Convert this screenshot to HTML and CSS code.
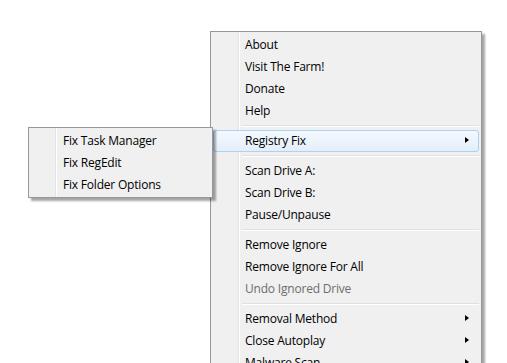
FILE: index.html
```html
<!DOCTYPE html>
<html lang="en">
<head>
    <meta charset="UTF-8">
    <title>Tray Menu</title>
    <link rel="stylesheet" href="styles.css">
</head>
<body>

    <!-- Main context menu -->
    <div class="menu main-menu">
        <div class="item">About</div>
        <div class="item">Visit The Farm!</div>
        <div class="item">Donate</div>
        <div class="item">Help</div>
        <div class="sep"></div>
        <div class="item sub active">Registry Fix</div>
        <div class="sep"></div>
        <div class="item">Scan Drive A:</div>
        <div class="item">Scan Drive B:</div>
        <div class="item">Pause/Unpause</div>
        <div class="sep"></div>
        <div class="item">Remove Ignore</div>
        <div class="item">Remove Ignore For All</div>
        <div class="item disabled">Undo Ignored Drive</div>
        <div class="sep"></div>
        <div class="item sub">Removal Method</div>
        <div class="item sub">Close Autoplay</div>
        <div class="item sub">Malware Scan</div>
    </div>

    <!-- Registry Fix submenu -->
    <div class="menu sub-menu">
        <div class="item">Fix Task Manager</div>
        <div class="item">Fix RegEdit</div>
        <div class="item">Fix Folder Options</div>
    </div>

</body>
</html>
```

FILE: styles.css
```css
* {
    margin: 0;
    padding: 0;
    box-sizing: border-box;
}

body {
    width: 507px;
    height: 363px;
    overflow: hidden;
    background-color: #ffffff;
    font-family: "Open Sans", "Noto Sans", sans-serif;
    font-size: 12px;
    color: #000;
    position: relative;
}

/* Popup menus */
.menu {
    position: absolute;
    background-color: #f0f0f0;
    border: 1px solid #979797;
    box-shadow: 3px 3px 2px rgba(0, 0, 0, 0.35);
    padding: 2px 2px 1px;
    /* icon gutter with its white/grey divider */
    background-image: linear-gradient(to right,
        transparent 27px, #e2e3e3 27px, #e2e3e3 28px,
        #ffffff 28px, #ffffff 29px, transparent 29px);
}

.main-menu {
    left: 210px;
    top: 31px;
    width: 272px;
}

.sub-menu {
    left: 28px;
    top: 127px;
    width: 185px;
    background-image: linear-gradient(to right,
        transparent 26px, #e2e3e3 26px, #e2e3e3 27px,
        #ffffff 27px, #ffffff 28px, transparent 28px);
}

.item {
    height: 22px;
    line-height: 20px;
    padding-left: 31px;
    white-space: nowrap;
    position: relative;
    border: 1px solid transparent;
    border-radius: 3px;
    letter-spacing: -0.2px;
}

.item.disabled {
    color: #6d6d6d;
}

.item.active {
    border-color: #a8d2f6;
    background: linear-gradient(to bottom, #f3f8fd, #e4eefa);
}

/* submenu arrow */
.item.sub::after {
    content: "";
    position: absolute;
    right: 9px;
    top: 6px;
    border-left: 4px solid #000;
    border-top: 3.5px solid transparent;
    border-bottom: 3.5px solid transparent;
}

.sep {
    height: 8px;
    margin-left: 29px;
    background: linear-gradient(to bottom,
        transparent 3px, #e0e0e0 3px, #e0e0e0 4px,
        #ffffff 4px, #ffffff 5px, transparent 5px);
}
```
